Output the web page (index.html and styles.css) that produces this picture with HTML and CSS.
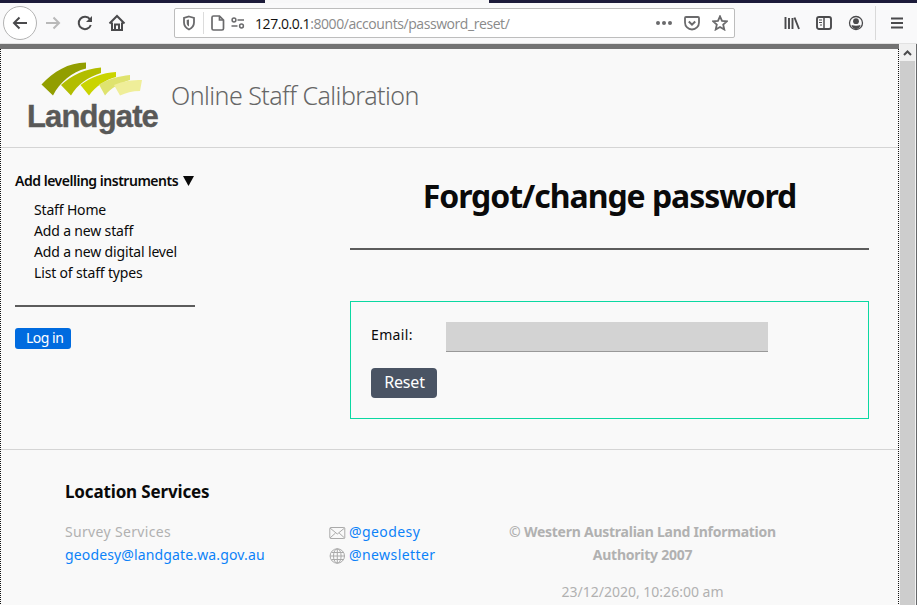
FILE: index.html
```html
<!DOCTYPE html>
<html lang="en">
<head>
<meta charset="utf-8">
<title>Online Staff Calibration</title>
<link rel="stylesheet" href="styles.css">
</head>
<body>
<div class="window">
  <div class="tabs"><i class="tab-gap"></i><i class="tab-active"></i></div>
  <div class="toolbar">
    <div class="nav">
      <span class="back"><svg width="18" height="18" viewBox="0 0 18 18"><path d="M16 9H3M8.5 3.5L3 9l5.500 5.500" stroke-width="2"/></svg></span>
      <svg class="forward" width="18" height="18" viewBox="0 0 18 18"><path d="M2 9h13M9.500 3.500L15 9l-5.500 5.500" stroke-width="2"/></svg>
      <svg class="reload" width="18" height="18" viewBox="0 0 18 18"><path d="M14 5.300A6.200 6.200 0 1 0 14.800 11" stroke-width="2"/><path d="M16 2v6h-6z" fill="#4a4a4c" stroke="none"/></svg>
      <svg class="home" width="18" height="18" viewBox="0 0 18 18"><path d="M1.500 9.500L9 2l7.500 7.500M4 8.500V16h10V8.500" stroke-width="2"/><path d="M7 16v-5.500h4V16" stroke-width="2"/></svg>
    </div>
    <div class="urlbar">
      <svg class="shield" width="14" height="16" viewBox="0 0 14 16"><path d="M7 1.500L12 3v4.500c0 3.500-2 5.500-5 7-3-1.500-5-3.500-5-7V3z" stroke-width="1.800"/><path d="M7 4.500v7C5 10.500 4.700 9 4.700 7.500V5z" fill="#6a6a6c" stroke="none"/></svg>
      <i class="sep"></i>
      <svg class="file" width="14" height="16" viewBox="0 0 14 16"><path d="M2.500 1h6l4 4v8.500q0 1.500-1.500 1.500H2.500Q1 15 1 13.500v-11Q1 1 2.500 1z M8.500 1v4h4" stroke-width="1.700"/></svg>
      <svg class="perm" width="14" height="12" viewBox="0 0 14 12"><path d="M6.500 3H13M.5 9h6" stroke-width="1.700"/><circle cx="3" cy="3" r="1.900" stroke-width="1.500"/><circle cx="10.500" cy="9" r="1.900" stroke-width="1.500"/></svg>
      <span class="url"><b>127.0.0.1</b>:8000/accounts/password_reset/</span>
      <svg class="dots" width="18" height="6" viewBox="0 0 18 6"><g fill="#6a6a6c" stroke="none"><circle cx="3" cy="3" r="2"/><circle cx="9" cy="3" r="2"/><circle cx="15" cy="3" r="2"/></g></svg>
      <svg class="pocket" width="16" height="16" viewBox="0 0 16 16"><path d="M2 2h12q1 0 1 1v4.500a7 7 0 0 1-14 0V3q0-1 1-1z" stroke-width="1.800"/><path d="M4.800 6.500L8 9.700l3.200-3.200" stroke-width="2"/></svg>
      <svg class="star" width="16" height="16" viewBox="0 0 16 16"><path d="M8 1.300l2 4.500 4.900.5-3.700 3.300 1.100 4.900L8 12l-4.300 2.500 1.100-4.900L1.100 6.300 6 5.800z" stroke-width="1.800"/></svg>
    </div>
    <div class="tools">
      <svg width="16" height="16" viewBox="0 0 16 16"><path d="M1.500 2v12M5 3v11M8.500 3v11M10.500 2.500l4.500 11.500" stroke-width="1.900"/></svg>
      <svg width="16" height="16" viewBox="0 0 16 16"><rect x="1" y="2" width="14" height="12" rx="2" stroke-width="1.900"/><path d="M8 2v12" stroke-width="1.500"/><path d="M3 5h3M3 7.500h3M4 10h2" stroke-width="1"/></svg>
      <svg width="16" height="16" viewBox="0 0 16 16"><circle cx="8" cy="8" r="6.500" stroke-width="1.300"/><circle cx="8" cy="6.200" r="2.900" fill="#4a4a4c" stroke="none"/><path d="M3.500 10q4.500 1.500 9 0-.8 4-4.500 4t-4.500-4z" fill="#4a4a4c" stroke="none"/></svg>
      <i class="tools-sep"></i>
      <svg class="burger" width="14" height="14" viewBox="0 0 14 14"><path d="M1 2.500h12M1 7h12M1 11.500h12" stroke-width="1.900"/></svg>
    </div>
  </div>
  <div class="viewport">
    <div class="page">
      <header class="header">
        <div class="logo">
          <svg width="136" height="35" viewBox="0 0 136 35">
            <path fill="#929e00" d="M16.500 22.500C29 9 43 1 61 .5V6.500C47 10 35 20 28 33.500z"/>
            <path fill="#b2bd00" d="M36 23C47 13 60 7 76 5.500V11C63 15 52 23 46 33.500z"/>
            <path fill="#cad400" d="M55.500 23C66 15 77 11 91 10v5C80 18 71 24 64 33.500z"/>
            <path fill="#dfe36e" d="M74 22.500C84 17 94 14 105 13v5C95 21 86 26 80 33.500z"/>
            <path fill="#efee99" d="M89 23C98 19 107 18 117 18l-2 11C107 29 101 31 95 33.500z"/>
          </svg>
          <div class="wordmark">Landgate</div>
        </div>
        <span class="app-name">Online Staff Calibration</span>
      </header>
      <div class="body">
        <nav class="sidebar">
          <div class="menu-title"><span>Add levelling instruments</span><svg width="11" height="10" viewBox="0 0 11 10"><path d="M0 0h11L5.500 10z" fill="#0a0a0a" stroke="none"/></svg></div>
          <ul class="menu"><li>Staff Home</li><li>Add a new staff</li><li>Add a new digital level</li><li>List of staff types</li></ul>
          <a class="login">Log in</a>
        </nav>
        <main class="main">
          <h1>Forgot/change password</h1>
          <form class="form">
            <div class="field"><label>Email:</label><div class="input"></div></div>
            <div class="reset"><span>Reset</span></div>
          </form>
        </main>
      </div>
      <footer class="footer">
        <h2>Location Services</h2>
        <div class="columns">
          <div class="contact"><div>Survey Services</div><a>geodesy@landgate.wa.gov.au</a></div>
          <div class="links">
            <div><svg width="17" height="16" viewBox="0 0 17 16"><rect x=".8" y="2.500" width="15" height="11" rx="1" stroke-width="1"/><path d="M1 3l7.300 6L15.600 3M1 13l5.500-5M15.600 13l-5.500-5" stroke-width="1"/></svg><a>@geodesy</a></div>
            <div><svg width="17" height="16" viewBox="0 0 17 16"><circle cx="8.300" cy="8" r="7.200" stroke-width="1"/><ellipse cx="8.300" cy="8" rx="3.800" ry="7.200" stroke-width="1"/><path d="M8.300 1v14M1 8h14.500M2.500 4.500h11.500M2.500 11.500h11.500" stroke-width="1"/></svg><a>@newsletter</a></div>
          </div>
          <div class="copyright"><b>© Western Australian Land Information</b><b>Authority 2007</b><span class="stamp">23/12/2020, 10:26:00 am</span></div>
        </div>
      </footer>
    </div>
    <div class="scrollbar"><svg width="15" height="12" viewBox="0 0 15 12"><path d="M4 8l3.500-3.500L11 8" stroke-width="2"/></svg></div>
    <div class="edge"></div>
  </div>
</div>
</body>
</html>
```
FILE: styles.css
```css
* { box-sizing: border-box; }
body { margin: 0; font-family: "Noto Sans", sans-serif; color: #0a0a0a; background: #f9f9fa; }
svg { fill: none; stroke: #4a4a4c; flex: none; display: block; }
.window { width: 917px; height: 605px; overflow: hidden; display: flex; flex-direction: column; }
.tabs { height: 3px; display: flex; background: #1c1b3a; flex: none; }
.tab-gap { width: 265px; }
.tab-active { width: 224px; background: #f7f7f8; }
.toolbar { height: 41px; flex: none; display: flex; align-items: center; background: #f9f9fa; border-bottom: 1px solid #e2e2e2; }
.nav { width: 174px; display: flex; align-items: center; padding-left: 3px; }
.back { width: 34px; height: 34px; border: 1px solid #b3b3b3; border-radius: 50%; background: #fff; display: flex; align-items: center; justify-content: center; }
.forward { margin-left: 7px; stroke: #b9b9b9; }
.reload { margin-left: 14px; }
.home { margin-left: 14px; }
.urlbar { width: 561px; height: 30px; border: 1px solid #bdbdbd; border-radius: 2px; background: #fff; display: flex; align-items: center; padding-left: 7px; }
.urlbar svg { stroke: #6a6a6c; }
.sep { width: 1px; height: 22px; background: #dcdcdc; margin: 0 7px; }
.perm { margin-left: 6px; }
.url { width: 400px; flex: none; margin-left: 10px; font: 14px "Open Sans", sans-serif; letter-spacing: -.43px; color: #8a8a8a; white-space: nowrap; }
.url b { font-weight: 400; color: #111; }
.pocket { margin-left: 11px; }
.star { margin-left: 12px; }
.tools { flex: 1; display: flex; align-items: center; gap: 16px; padding-left: 49px; }
.tools-sep { width: 1px; height: 34px; background: #d9d9d9; margin-left: -5px; }
.burger { margin-left: -2px; }
.viewport { flex: 1; display: flex; min-height: 0; }
.page { width: 899px; border-top: 5px solid #737373; display: flex; flex-direction: column; background-color: #f9f9f9; background-image: repeating-linear-gradient(#111 0 1px, #f9f9f9 1px 2px), repeating-linear-gradient(#111 0 1px, #f9f9f9 1px 2px); background-size: 1px 100%; background-position: left top, right top; background-repeat: no-repeat; padding: 0 1px; }
.scrollbar { width: 17px; padding: 3px 1px 0; background: linear-gradient(#f0f0f0 17px, #cdcdcd 17px) 1px 0 / 15px 100% no-repeat, #f5f5f5; }
.edge { width: 1px; background: #66686a; }
.header { height: 99px; border-bottom: 1px solid #d5d5d5; display: flex; padding: 13px 0 0 24px; }
.logo { width: 136px; }
.logo path { stroke: none; }
.wordmark { padding-left: 2px; font: bold 31px/39px "Liberation Sans", sans-serif; letter-spacing: -.85px; color: #595958; -webkit-text-stroke: .4px #595958; }
.app-name { margin: 15px 0 0 10px; font-size: 25px; line-height: 36px; font-weight: 300; letter-spacing: -.54px; color: #666; white-space: nowrap; }
.body { height: 302px; border-bottom: 1px solid #d5d5d5; display: flex; justify-content: space-between; padding: 0 29px 0 14px; }
.sidebar { width: 180px; padding-top: 22px; font-size: 14px; line-height: 21px; white-space: nowrap; }
.menu-title { display: flex; align-items: center; justify-content: space-between; font-weight: 600; letter-spacing: -.48px; padding-right: 1px; }
.menu { list-style: none; margin: 8px 0 21px; padding: 0 0 22px 19px; border-bottom: 2px solid #5c5c5c; letter-spacing: -.16px; }
.login { display: block; width: 56px; height: 21px; line-height: 20px; padding-left: 11px; border-radius: 3px; background: #006bdf; color: #fff; letter-spacing: -.5px; }
.main { width: 519px; padding-top: 20px; }
h1 { margin: 0; height: 82px; padding-top: 5px; border-bottom: 2px solid #5c5c5c; font-size: 32px; line-height: 46px; letter-spacing: -1.05px; text-align: center; white-space: nowrap; }
.form { margin-top: 51px; height: 118px; border: 1px solid #0bd8a2; padding: 20px; font-size: 14px; }
.field { display: flex; height: 30px; }
.field label { width: 75px; line-height: 26px; letter-spacing: .35px; }
.input { width: 322px; background: #d3d3d3; border-bottom: 1px solid #999; }
.reset { margin-top: 16px; width: 66px; height: 30px; line-height: 29px; border-radius: 4px; background: #4a5464; color: #fff; font-size: 16px; letter-spacing: -.2px; text-align: center; padding-left: 1px; }
.footer { flex: 1; padding: 30px 0 0 64px; font-size: 14px; line-height: 23px; white-space: nowrap; }
h2 { margin: 0 0 17px; font-size: 17px; line-height: 23px; letter-spacing: -.15px; }
.columns { display: flex; color: #b1b1b1; }
.columns a { color: #0c82f8; }
.contact { width: 264px; letter-spacing: .14px; }
.contact div { letter-spacing: .33px; }
.links { width: 163px; letter-spacing: .42px; }
.links div { display: flex; align-items: center; }
.links svg { stroke: #aaa; margin-right: 3px; margin-top: 3px; }
.copyright { width: 301px; display: flex; flex-direction: column; align-items: center; }
.copyright b { letter-spacing: -.25px; }
.stamp { margin-top: 14px; }
```
